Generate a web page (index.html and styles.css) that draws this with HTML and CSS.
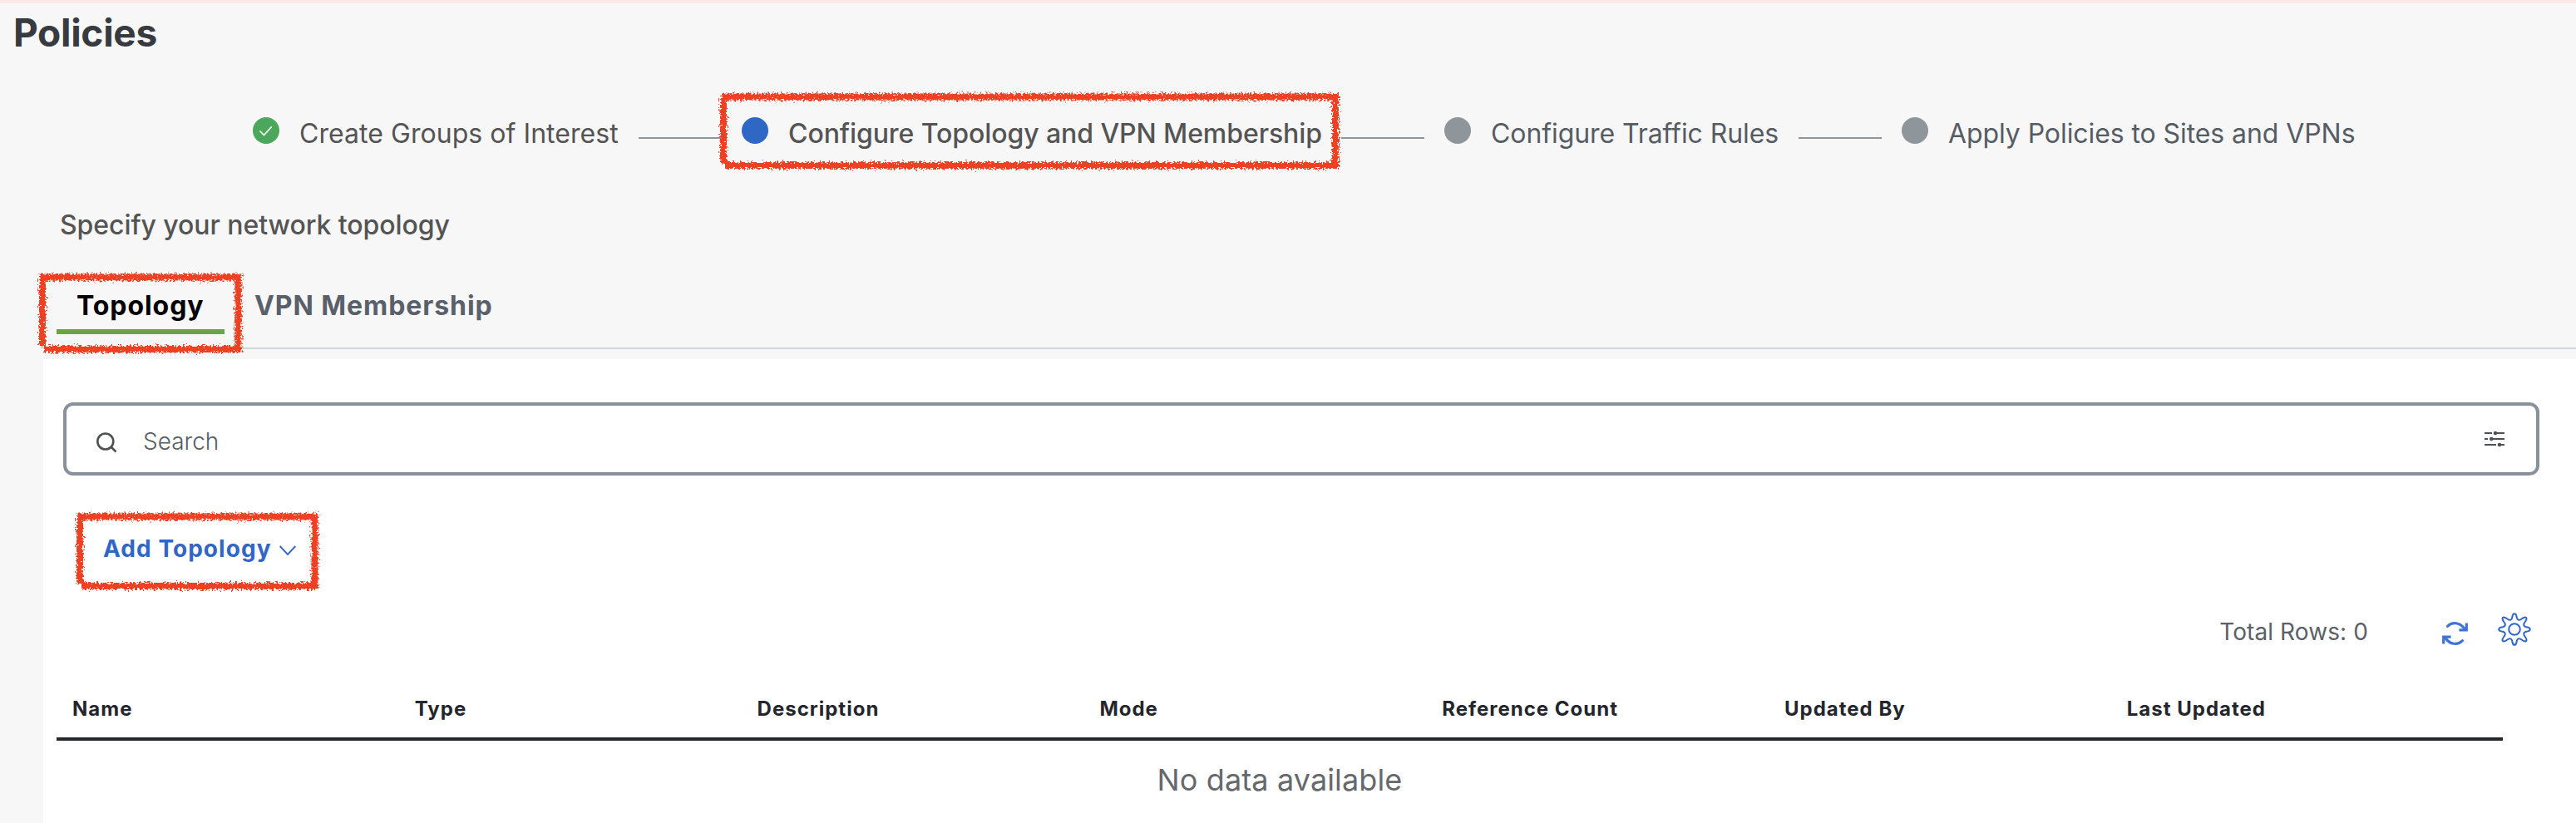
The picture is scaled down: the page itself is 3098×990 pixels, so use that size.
FILE: index.html
```html
<!DOCTYPE html>
<html lang="en">
<head>
<meta charset="utf-8">
<title>Policies</title>
<link rel="stylesheet" href="styles.css">
</head>
<body>
<svg class="defs" width="0" height="0" aria-hidden="true">
  <filter id="crayon" filterUnits="userSpaceOnUse" x="-10" y="-10" width="800" height="140">
    <feTurbulence type="fractalNoise" baseFrequency="0.45" numOctaves="2" seed="4" result="noise"/>
    <feDisplacementMap in="SourceGraphic" in2="noise" scale="10" xChannelSelector="R" yChannelSelector="G"/>
  </filter>
</svg>
<header class="page-head"><h1 class="title">Policies</h1></header>

<ol class="steps">
  <li class="step">
    <svg class="dot" viewBox="0 0 32 32"><circle cx="16" cy="16" r="16" fill="#4aa75b"/><path d="M8.500 16.500l5 5L22.800 11.200" fill="none" stroke="#fff" stroke-width="1.700"/></svg>
    <span class="label label-1">Create Groups of Interest</span>
  </li>
  <li class="link"></li>
  <li class="step current">
    <span class="dot blue"></span>
    <span class="label label-2">Configure Topology and VPN Membership</span>
    <svg class="mark mark-step" viewBox="0 0 744 92"><path d="M4 4V84M6 87H740V4.500H2"/></svg>
  </li>
  <li class="link"></li>
  <li class="step">
    <span class="dot grey"></span>
    <span class="label label-3">Configure Traffic Rules</span>
  </li>
  <li class="link"></li>
  <li class="step">
    <span class="dot grey"></span>
    <span class="label label-4">Apply Policies to Sites and VPNs</span>
  </li>
</ol>

<p class="intro">Specify your network topology</p>

<nav class="tabs">
  <a class="tab active"><span class="tab-text">Topology</span>
    <svg class="mark mark-tab" viewBox="0 0 243 96"><path d="M4 4V88M6 91H239.500V4.500H1"/></svg>
  </a>
  <a class="tab"><span class="tab-text">VPN Membership</span></a>
</nav>

<main class="panel">
  <div class="search">
    <svg class="search-icon" viewBox="0 0 24 24" fill="none" stroke="#4f5052" stroke-width="2.600"><circle cx="10.800" cy="11" r="9.500"/><path d="M17.500 17.500l6 6"/></svg>
    <span class="placeholder">Search</span>
    <svg class="filter-icon" viewBox="0 0 24 20" stroke="#4f5052" stroke-width="2" fill="#4f5052"><path d="M0 3H9M12 3H24M0 10H4M8 10H24M0 17H14M18 17H24"/><g stroke="none"><circle cx="13" cy="3" r="2.300"/><circle cx="8.200" cy="10" r="2.300"/><circle cx="18" cy="17" r="2.300"/></g></svg>
  </div>

  <button class="add" type="button"><span class="add-text">Add Topology</span>
    <svg class="chevron" viewBox="0 0 20 12"><path d="M.7 1L10 10.800L19.300 1" fill="none" stroke="#3166c8" stroke-width="1.900"/></svg>
    <svg class="mark mark-add" viewBox="0 0 290 93"><path d="M4 4V85M6 88H286.500V4.500H1"/></svg>
  </button>

  <div class="tools">
    <span class="total">Total Rows: 0</span>
    <svg class="refresh" viewBox="0 0 31 30" fill="none" stroke="#3f74d6" stroke-width="3.200"><path d="M6.500 6.300C12 .8 21.500 1 27.500 10" stroke-linecap="round"/><path d="M29.300 4V10.800H22" stroke-linecap="square"/><path d="M24.500 23.700C19 29.200 9.500 29 3.500 20" stroke-linecap="round"/><path d="M1.700 26V19.200H9" stroke-linecap="square"/></svg>
    <svg class="gear" viewBox="0 0 40 40" fill="none" stroke="#3166c8" stroke-width="2"><circle cx="20" cy="20" r="6.800"/><path d="M17.500 4.500Q18 1.200 20 1.200T22.500 4.500C23 9 25.500 10 29 7.300Q32.500 4.600 34 6T32.700 11C30 14.500 31 17 35.500 17.500Q38.800 18 38.800 20T35.500 22.500C31 23 30 25.500 32.700 29Q35.400 32.500 34 34T29 32.700C25.500 30 23 31 22.500 35.500Q22 38.800 20 38.800T17.500 35.500C17 31 14.500 30 11 32.700Q7.500 35.400 6 34T7.300 29C10 25.500 9 23 4.500 22.500Q1.200 22 1.200 20T4.500 17.500C9 17 10 14.500 7.300 11Q4.600 7.500 6 6T11 7.300C14.500 10 17 9 17.500 4.500Z"/></svg>
  </div>

  <div class="table">
    <div class="thead">
      <span>Name</span><span>Type</span><span>Description</span><span>Mode</span><span>Reference Count</span><span>Updated By</span><span>Last Updated</span>
    </div>
    <div class="empty">No data available</div>
  </div>
</main>
</body>
</html>
```
FILE: styles.css
```css
* { box-sizing: border-box; }
body {
  margin: 0;
  height: 990px;
  overflow: hidden;
  display: flex;
  flex-direction: column;
  background: #f7f7f7;
  font-family: Inter, "Liberation Sans", sans-serif;
  color: #545454;
}
svg { display: block; flex: none; overflow: visible; }
.defs { width: 0; height: 0; position: absolute; }

.page-head { height: 112px; border-top: 4px solid #fde8e8; padding: 7px 0 0 16px; }
.title { margin: 0; font-size: 46px; line-height: 56px; font-weight: 700; letter-spacing: -0.3px; color: #373b40; }

.steps { list-style: none; margin: 0; padding: 29px 0 0 304px; height: 92px; display: flex; align-items: flex-start; }
.step { display: flex; position: relative; }
.dot { width: 32px; height: 32px; border-radius: 50%; flex: none; }
.blue { background: #2f67c5; }
.grey { background: #8e969c; }
.label { margin-left: 24px; font-size: 32px; line-height: 40px; white-space: nowrap; letter-spacing: -0.08px; }
.label-1 { width: 384px; letter-spacing: 0.05px; }
.label-2 { width: 641px; font-weight: 500; }
.label-3 { width: 346px; color: #565c64; }
.label-4 { color: #565c64; }
.link { width: 100px; height: 2px; background: #8e969c; margin: 24px 24px 0; flex: none; }

.mark { position: absolute; pointer-events: none; }
.mark path { fill: none; stroke: #ee4023; stroke-width: 8px; filter: url(#crayon); }
.mark-step { left: -26px; top: -29px; width: 744px; height: 92px; }
.mark-tab { left: -21px; top: -3px; width: 243px; height: 96px; }
.mark-add { left: -32px; top: -23px; width: 290px; height: 93px; }

.intro { margin: 0; padding: 47px 0 0 72px; height: 128px; font-size: 32px; line-height: 40px; font-weight: 500; letter-spacing: -0.07px; }

.tabs { height: 88px; margin-left: 52px; padding-left: 16px; border-bottom: 2px solid #d2d8da; display: flex; gap: 12px; }
.tab { position: relative; height: 70px; padding: 16px 24px 0; font-size: 32px; line-height: 40px; font-weight: 700; letter-spacing: 0.93px; color: #59606a; white-space: nowrap; }
.active { width: 202px; color: #000; border-bottom: 6px solid #6ba543; }

.panel { flex: 1; margin: 12px 0 0 52px; background: #fff; padding: 52px 0 0; display: flex; flex-direction: column; align-items: flex-start; }
.search { width: 2978px; height: 88px; margin-left: 24px; border: 4px solid #889099; border-radius: 12px; display: flex; align-items: center; padding: 0 38px 0 36px; }
.search-icon { width: 24px; height: 24px; margin-top: 8px; }
.placeholder { margin: 6px auto 0 32px; font-size: 28px; line-height: 36px; font-weight: 300; color: #565c64; }
.filter-icon { width: 24px; height: 20px; }

.add { position: relative; margin: 68px 0 0 72px; padding: 0; border: 0; background: none; height: 40px; display: flex; align-items: center; font: 700 28px/40px Inter, sans-serif; letter-spacing: 1.050px; color: #3166c8; white-space: nowrap; }
.add-text { width: 212px; text-align: left; }
.chevron { width: 20px; height: 12px; margin-top: 4px; }

.tools { width: 2992px; height: 44px; margin-top: 56px; display: flex; justify-content: flex-end; }
.total { font-size: 28px; line-height: 36px; margin-top: 6px; color: #5b6167; letter-spacing: 0.1px; }
.refresh { width: 31px; height: 30px; margin: 11px 36px 0 89px; }
.gear { width: 40px; height: 40px; margin-top: 1px; }

.table { width: 2942px; margin-left: 16px; }
.thead { margin-top: 43px; height: 68px; border-bottom: 4px solid #23282c; display: grid; grid-template-columns: repeat(7, 411.800px); padding-left: 19px; font-size: 24px; line-height: 36px; font-weight: 700; letter-spacing: 1px; color: #23262d; }
.thead span { padding-top: 12px; white-space: nowrap; }
.empty { padding-top: 25px; text-align: center; font-size: 36px; line-height: 44px; letter-spacing: 0.120px; color: #65696d; }
```
